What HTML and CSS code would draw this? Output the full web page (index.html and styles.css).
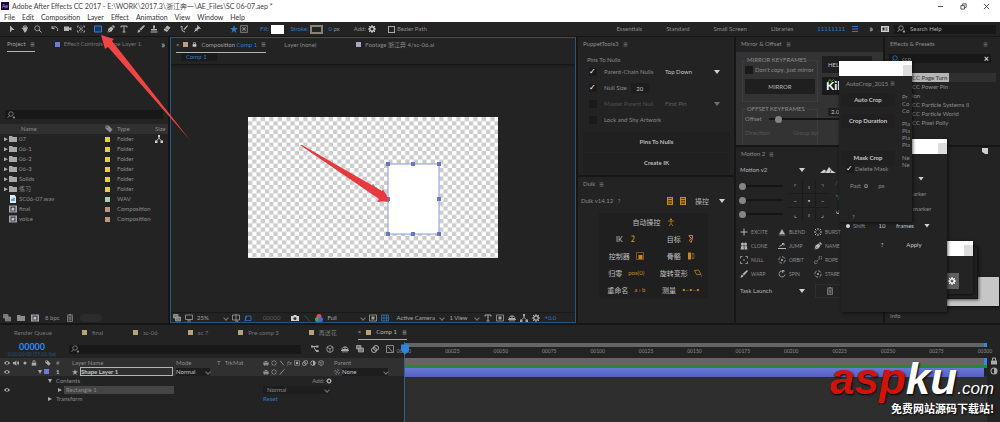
FILE: index.html
```
<!DOCTYPE html>
<html lang="en">
<head>
    <meta charset="UTF-8">
    <meta name="viewport" content="width=device-width, initial-scale=1.0">
    <title>Adobe After Effects CC 2017</title>
    <link rel="stylesheet" href="styles.css">
</head>
<body>
    <svg class="sprite" aria-hidden="true">
        <symbol id="i-menu" viewBox="0 0 16 16"><path d="M2 3h12M2 8h12M2 13h12" stroke="currentColor" stroke-width="2"/></symbol>
        <symbol id="i-arrow" viewBox="0 0 16 16"><path d="M4 1l9 9H8l-4 5z" fill="currentColor"/></symbol>
        <symbol id="i-hand" viewBox="0 0 16 16"><path d="M4 9L1 6l1-1 3 2-1-5 1-1 2 5V0h2v6l2-5 1 1-1 5 2-3 1 1-3 7-2 3H7z" fill="currentColor"/></symbol>
        <symbol id="i-zoom" viewBox="0 0 16 16"><circle cx="6.500" cy="6.500" r="5" fill="none" stroke="currentColor" stroke-width="1.500"/><path d="M10 10l5 5" stroke="currentColor" stroke-width="2"/></symbol>
        <symbol id="i-rotate" viewBox="0 0 16 16"><path d="M3 6c4-5 12-2 10 6M2 2v5h5" fill="none" stroke="currentColor" stroke-width="2"/></symbol>
        <symbol id="i-cam" viewBox="0 0 16 16"><path d="M0 3h10v3l5-2v7l-5-2v3H0z" fill="currentColor"/></symbol>
        <symbol id="i-anchor" viewBox="0 0 16 16"><path d="M1 5V2h3M12 2h3v3M15 11v3h-3M4 14H1v-3M7 2h2M7 14h2M8 5v6M5 8h6M4 4l2 2M12 4l-2 2M4 12l2-2M12 12l-2-2" fill="none" stroke="currentColor" stroke-width="1.500"/></symbol>
        <symbol id="i-rect" viewBox="0 0 16 16"><path d="M1 2h14v12H1z" fill="#123a66" stroke="#2f7fd0" stroke-width="2"/></symbol>
        <symbol id="i-pen" viewBox="0 0 16 16"><path d="M1 15l2-8 6-4 4 4-4 6zM10 2l2-2 4 4-2 2z" fill="currentColor"/><path d="M1 15l5-5" stroke="#222"/></symbol>
        <symbol id="i-type" viewBox="0 0 16 16"><path d="M2 5V2h12v3M8 2v12M5 14h6" fill="none" stroke="currentColor" stroke-width="2"/></symbol>
        <symbol id="i-brush" viewBox="0 0 16 16"><path d="M14 0l2 2-8 9-3-3zM4 9l3 3c-1 3-4 3-7 3 2-1 2-5 4-6z" fill="currentColor"/></symbol>
        <symbol id="i-stamp" viewBox="0 0 16 16"><path d="M6 1h4v3L9 8h5v3H2V8h5L6 4zM1 13h14v2H1z" fill="currentColor"/></symbol>
        <symbol id="i-eraser" viewBox="0 0 16 16"><path d="M8 1l7 4-7 9-7-4z" fill="currentColor"/><path d="M4 6l7 4" stroke="#222"/></symbol>
        <symbol id="i-roto" viewBox="0 0 16 16"><path d="M15 0l1 2-7 8-2-2z" fill="currentColor"/><path d="M1 4l3-2v9l6 3" fill="none" stroke="currentColor" stroke-width="2"/></symbol>
        <symbol id="i-pin" viewBox="0 0 16 16"><path d="M9 0l7 7-2 1-2-1-3 3v3L3 7h3l3-3-1-2zM5 9l2 2-6 4z" fill="currentColor"/></symbol>
        <symbol id="i-star" viewBox="0 0 16 16"><path d="M8 0l2 6h6l-5 4 2 6-5-4-5 4 2-6-5-4h6z" fill="currentColor"/></symbol>
        <symbol id="i-mesh" viewBox="0 0 16 16"><path d="M1 1h14v14H1zM3 3l10 10M13 3L3 13M8 3v10M3 8h10" fill="none" stroke="currentColor" stroke-width="1.500"/></symbol>
        <symbol id="i-gear" viewBox="0 0 16 16"><circle cx="8" cy="8" r="4.500" fill="none" stroke="currentColor" stroke-width="3"/><path d="M8 0v3M8 13v3M0 8h3M13 8h3M2 2l3 3M11 11l3 3M14 2l-3 3M5 11l-3 3" stroke="currentColor" stroke-width="2"/></symbol>
        <symbol id="i-search" viewBox="0 0 16 16"><circle cx="8" cy="6" r="4.500" fill="none" stroke="currentColor" stroke-width="1.500"/><path d="M5 9l-4 5M12 12h4l-2 3z" fill="currentColor" stroke="currentColor" stroke-width="1.500"/></symbol>
        <symbol id="i-folder" viewBox="0 0 16 16"><path d="M0 2h6l2 2h8v10H0z" fill="currentColor"/></symbol>
        <symbol id="i-comp" viewBox="0 0 16 16"><path d="M0 1h16v14H0z" fill="#a7a6ad"/><path d="M3 3h10v10H3z" fill="#4a4a50"/><path d="M5 7l3-2 3 2-1 4H5z" fill="#c5c4cc"/></symbol>
        <symbol id="i-wav" viewBox="0 0 16 16"><path d="M2 0h9l3 3v13H2z" fill="#dcebf4"/><path d="M5 12V8h2v4M9 12V6h2v6" fill="none" stroke="#3f8fc4" stroke-width="1.500"/></symbol>
        <symbol id="i-tag" viewBox="0 0 16 16"><path d="M1 1h6l8 8-5 6-9-8z" fill="currentColor"/><circle cx="4" cy="4" r="1.500" fill="#333"/></symbol>
        <symbol id="i-tree" viewBox="0 0 16 16"><path d="M6 0h4v5H6zM0 11h5v5H0zM11 11h5v5h-5z" fill="currentColor"/><path d="M8 5v3M3 11l5-4 5 4" fill="none" stroke="currentColor" stroke-width="1.500"/></symbol>
        <symbol id="i-trash" viewBox="0 0 16 16"><path d="M3 4h10v11H3zM2 2h12M6 1h4M6 6v7M8 6v7M10 6v7" fill="none" stroke="currentColor" stroke-width="1.500"/></symbol>
        <symbol id="i-stack" viewBox="0 0 16 16"><path d="M1 1h9v7H1zM5 6h10v8H5z" fill="#777" stroke="currentColor" stroke-width="1.500"/></symbol>
        <symbol id="i-monitor" viewBox="0 0 16 16"><path d="M1 2h14v9H1zM8 11v3M4 14h8" fill="none" stroke="currentColor" stroke-width="1.500"/></symbol>
        <symbol id="i-grid" viewBox="0 0 16 16"><path d="M1 2h14v10H1zM8 0v16M9 12l3 4" fill="none" stroke="currentColor" stroke-width="1.500"/></symbol>
        <symbol id="i-mask" viewBox="0 0 16 16"><path d="M3 4h11v9H3zM1 15L6 4" fill="none" stroke="currentColor" stroke-width="1.500"/></symbol>
        <symbol id="i-photo" viewBox="0 0 16 16"><path d="M0 4h4l2-2h4l2 2h4v10H0z" fill="currentColor"/><circle cx="8" cy="9" r="3" fill="#333"/></symbol>
        <symbol id="i-rgb" viewBox="0 0 16 16"><circle cx="8" cy="5" r="5" fill="#e34b4b"/><circle cx="5" cy="11" r="5" fill="#3fae57"/><circle cx="11" cy="11" r="5" fill="#4c67dd"/></symbol>
        <symbol id="i-box" viewBox="0 0 16 16"><path d="M1 2h14v12H1z" fill="none" stroke="currentColor" stroke-width="1.500"/><path d="M5 5h6v6H5z" fill="currentColor"/></symbol>
        <symbol id="i-check" viewBox="0 0 16 16"><path d="M1 2h14v12H1zM1 8h14M6 2v12M11 2v12" fill="none" stroke="currentColor" stroke-width="1.500"/></symbol>
        <symbol id="i-switch" viewBox="0 0 16 16"><path d="M0 2h16v12H0z" fill="currentColor"/><path d="M3 5h4v6H3zM9 5h4v2H9zM9 9h4v2H9z" fill="#222"/></symbol>
        <symbol id="i-calc" viewBox="0 0 16 16"><path d="M2 0h12v16H2z" fill="currentColor"/><path d="M4 3h8M4 7h8M4 10h8M4 13h8" stroke="#3a2a0c" stroke-width="1.500"/></symbol>
        <symbol id="i-eye" viewBox="0 0 16 16"><path d="M0 8c4-6 12-6 16 0-4 6-12 6-16 0z" fill="currentColor"/><circle cx="8" cy="8" r="3" fill="#222"/></symbol>
        <symbol id="i-speaker" viewBox="0 0 16 16"><path d="M0 5h4l5-4v14l-5-4H0zM11 4c3 2 3 6 0 8M13 1c4 4 4 10 0 14" fill="currentColor"/></symbol>
        <symbol id="i-dot" viewBox="0 0 16 16"><circle cx="8" cy="8" r="4" fill="currentColor"/></symbol>
        <symbol id="i-lock" viewBox="0 0 16 16"><path d="M2 7h12v8H2z" fill="currentColor"/><path d="M5 7V2h6v5" fill="none" stroke="currentColor" stroke-width="2"/></symbol>
        <symbol id="i-slash" viewBox="0 0 16 16"><path d="M3 2l10 12" stroke="currentColor" stroke-width="2"/></symbol>
        <symbol id="i-quality" viewBox="0 0 16 16"><path d="M2 15L14 1" stroke="currentColor" stroke-width="2"/></symbol>
        <symbol id="i-blur" viewBox="0 0 16 16"><circle cx="10" cy="6" r="5" fill="none" stroke="currentColor" stroke-width="2"/><circle cx="6" cy="10" r="5" fill="none" stroke="currentColor" stroke-width="2"/></symbol>
        <symbol id="i-half" viewBox="0 0 16 16"><circle cx="8" cy="8" r="7" fill="currentColor"/><path d="M8 3a5 5 0 0 0 0 10z" fill="#222"/></symbol>
        <symbol id="i-cube" viewBox="0 0 16 16"><path d="M8 1l6 3v8l-6 3-6-3V4zM2 4l6 4 6-4M8 8v7" fill="none" stroke="currentColor" stroke-width="1.500"/></symbol>
        <symbol id="i-shy" viewBox="0 0 16 16"><path d="M2 9c0-7 12-7 12 0H2zM0 11h16M4 11v4M12 11v4M8 4v11" fill="none" stroke="currentColor" stroke-width="2"/></symbol>
        <symbol id="i-flow" viewBox="0 0 16 16"><path d="M0 3h14M5 3l5 9h5" fill="none" stroke="currentColor" stroke-width="2"/><path d="M10 1h5v4h-5zM10 10h5v4h-5zM0 1h4v4H0z" fill="currentColor"/></symbol>
        <symbol id="i-graph" viewBox="0 0 16 16"><path d="M1 1h14v14H1zM3 4c6 0 4 8 10 9" fill="none" stroke="currentColor" stroke-width="1.500"/></symbol>
        <symbol id="i-burst" viewBox="0 0 16 16"><path d="M8 0v4M8 12v4M0 8h4M12 8h4M2 2l3 3M11 11l3 3M14 2l-3 3M5 11l-3 3" stroke="currentColor" stroke-width="2"/></symbol>
        <symbol id="i-plus" viewBox="0 0 16 16"><path d="M8 1v14M1 8h14" stroke="currentColor" stroke-width="2"/></symbol>
        <symbol id="i-blend" viewBox="0 0 16 16"><path d="M1 14h14M3 12L8 3l5 9z" fill="currentColor" stroke="currentColor"/></symbol>
        <symbol id="i-people" viewBox="0 0 16 16"><circle cx="5" cy="4" r="3" fill="currentColor"/><circle cx="11" cy="4" r="3" fill="currentColor"/><path d="M1 15l2-8h4l1 8zM9 15V7h4l2 8z" fill="currentColor"/></symbol>
        <symbol id="i-jump" viewBox="0 0 16 16"><path d="M0 13h16M3 9l8-5M8 3h4v4" fill="none" stroke="currentColor" stroke-width="2"/></symbol>
        <symbol id="i-null" viewBox="0 0 16 16"><path d="M1 5V1h4M11 1h4v4M15 11v4h-4M5 15H1v-4" fill="none" stroke="currentColor" stroke-width="1.500"/><circle cx="8" cy="8" r="1.500" fill="currentColor"/></symbol>
        <symbol id="i-orbit" viewBox="0 0 16 16"><circle cx="8" cy="8" r="6.500" fill="none" stroke="currentColor" stroke-width="1.500" stroke-dasharray="7 3"/><circle cx="8" cy="8" r="2" fill="currentColor"/></symbol>
        <symbol id="i-spin" viewBox="0 0 16 16"><path d="M9 2a6 6 0 1 0 5 7M9 0v5l4-3z" fill="none" stroke="currentColor" stroke-width="1.500"/></symbol>
        <symbol id="i-rope" viewBox="0 0 16 16"><path d="M1 10h5v5H1zM10 1h5v5h-5zM6 10l4-4" fill="none" stroke="currentColor" stroke-dasharray="3 1"/></symbol>
        <symbol id="i-mount" viewBox="0 0 32 16"><path d="M0 14l8-7 5 3 5-8 6 7 8 5z" fill="currentColor"/><path d="M9 14l5-5M20 14l2-6" stroke="#232323"/></symbol>
        <symbol id="i-corner" viewBox="0 0 16 16"><path d="M0 0h16v16H8l-8-6z" fill="currentColor"/></symbol>
    </svg>

    <header class="titlebar">
        <span class="logo">Ae</span>
        <h1>Adobe After Effects CC 2017 - E:\WORK\2017.3\浙江奔一\AE_Files\SC 06-07.aep *</h1>
        <div class="win-buttons">
            <button aria-label="Minimize"><svg viewBox="0 0 8 8"><path d="M1 4h6" stroke="#444"/></svg></button>
            <button aria-label="Restore"><svg viewBox="0 0 8 8"><path d="M1 3h4v4H1zM3 3V1h4v4H5" fill="none" stroke="#444"/></svg></button>
            <button aria-label="Close"><svg viewBox="0 0 8 8"><path d="M1 1l6 6M7 1L1 7" stroke="#444"/></svg></button>
        </div>
    </header>
    <nav class="menubar">
        <a href="#">File</a><a href="#">Edit</a><a href="#">Composition</a><a href="#">Layer</a><a href="#">Effect</a><a href="#">Animation</a><a href="#">View</a><a href="#">Window</a><a href="#">Help</a>
    </nav>

    <div class="toolbar">
        <div class="tools">
            <button aria-label="Selection"><svg><use href="#i-arrow"/></svg></button>
            <button aria-label="Hand"><svg><use href="#i-hand"/></svg></button>
            <button aria-label="Zoom"><svg><use href="#i-zoom"/></svg></button>
        </div>
        <div class="tools">
            <button aria-label="Rotation"><svg><use href="#i-rotate"/></svg></button>
            <button aria-label="Camera"><svg><use href="#i-cam"/></svg></button>
            <button aria-label="Anchor point"><svg><use href="#i-anchor"/></svg></button>
        </div>
        <div class="tools">
            <button aria-label="Rectangle"><svg><use href="#i-rect"/></svg></button>
            <button aria-label="Pen"><svg><use href="#i-pen"/></svg></button>
            <button aria-label="Type"><svg><use href="#i-type"/></svg></button>
        </div>
        <div class="tools">
            <button aria-label="Brush"><svg><use href="#i-brush"/></svg></button>
            <button aria-label="Clone stamp"><svg><use href="#i-stamp"/></svg></button>
            <button aria-label="Eraser"><svg><use href="#i-eraser"/></svg></button>
        </div>
        <div class="tools">
            <button aria-label="Roto brush"><svg><use href="#i-roto"/></svg></button>
            <button aria-label="Puppet pin"><svg><use href="#i-pin"/></svg></button>
        </div>
        <div class="shape-options">
            <svg class="blue"><use href="#i-star"/></svg>
            <svg><use href="#i-mesh"/></svg>
            <span class="blue option">Fill:</span><button class="fill-swatch" aria-label="Fill color"></button>
            <span class="blue">Stroke:</span><button class="stroke-swatch" aria-label="Stroke color"></button>
            <span class="px"><b class="blue">0</b> px</span>
            <span>Add:</span><svg class="light"><use href="#i-gear"/></svg>
            <label class="bezier"><input type="checkbox"> Bezier Path</label>
        </div>
        <div class="workspaces">
            <a href="#">Essentials</a><a href="#">Standard</a><a href="#">Small Screen</a><a href="#">Libraries</a>
            <a href="#" class="blue current">11111111</a><svg class="blue"><use href="#i-menu"/></svg>
            <span class="light more">»</span>
            <svg class="light"><use href="#i-switch"/></svg>
            <label class="help-search"><svg><use href="#i-search"/></svg><input type="text" value="Search Help" aria-label="Search Help"></label>
        </div>
    </div>

    <main class="workspace">
        <section class="panel project">
            <div class="tabs">
                <span class="tab active">Project <svg><use href="#i-menu"/></svg></span>
                <span class="tab second"><i class="swatch violet"></i>Effect Controls Shape Layer 1</span>
                <span class="light more">»</span>
            </div>
            <div class="preview"></div>
            <label class="search"><svg><use href="#i-search"/></svg><input type="text" aria-label="Search project"></label>
            <table class="files">
                <colgroup><col class="c-name"><col class="c-tag"><col class="c-type"><col></colgroup>
                <thead>
                    <tr><th class="first">Name</th><th><svg><use href="#i-tag"/></svg></th><th>Type</th><th>Size</th></tr>
                </thead>
                <tbody>
                    <tr><td><i class="tri"></i><svg><use href="#i-folder"/></svg>07</td><td><i class="swatch yellow"></i></td><td>Folder</td><td><svg class="light"><use href="#i-tree"/></svg></td></tr>
                    <tr><td><i class="tri"></i><svg><use href="#i-folder"/></svg>06-1</td><td><i class="swatch yellow"></i></td><td>Folder</td><td></td></tr>
                    <tr><td><i class="tri"></i><svg><use href="#i-folder"/></svg>06-2</td><td><i class="swatch yellow"></i></td><td>Folder</td><td></td></tr>
                    <tr><td><i class="tri"></i><svg><use href="#i-folder"/></svg>06-3</td><td><i class="swatch yellow"></i></td><td>Folder</td><td></td></tr>
                    <tr><td><i class="tri"></i><svg><use href="#i-folder"/></svg>Solids</td><td><i class="swatch yellow"></i></td><td>Folder</td><td></td></tr>
                    <tr><td><i class="tri"></i><svg><use href="#i-folder"/></svg>练习</td><td><i class="swatch yellow"></i></td><td>Folder</td><td></td></tr>
                    <tr><td><i class="tri none"></i><svg><use href="#i-wav"/></svg>SC06-07.wav</td><td><i class="swatch mint"></i></td><td>WAV</td><td></td></tr>
                    <tr><td><i class="tri none"></i><svg><use href="#i-comp"/></svg>final</td><td><i class="swatch tan"></i></td><td>Composition</td><td></td></tr>
                    <tr><td><i class="tri none"></i><svg><use href="#i-comp"/></svg>voice</td><td><i class="swatch tan"></i></td><td>Composition</td><td></td></tr>
                </tbody>
            </table>
            <div class="project-foot">
                <svg><use href="#i-stack"/></svg><svg><use href="#i-folder"/></svg><svg><use href="#i-comp"/></svg>
                <span>8 bpc</span><svg><use href="#i-trash"/></svg><i class="pill"></i>
            </div>
        </section>

        <section class="panel composition">
            <div class="tabs">
                <span class="tab active">× <i class="swatch sand"></i><svg class="light"><use href="#i-lock"/></svg> <span>Composition <b class="blue">Comp 1</b></span> <svg><use href="#i-menu"/></svg></span>
                <span class="tab">Layer (none)</span>
                <span class="tab footage"><i class="swatch lilac"></i>Footage 浙江奔 4/sc-06.ai</span>
            </div>
            <div class="crumbs"><a href="#" class="blue">Comp 1</a></div>
            <div class="viewer">
                <svg class="stage" viewBox="0 0 250 141">
                    <defs>
                        <pattern id="checks" width="8.500" height="8.500" patternUnits="userSpaceOnUse">
                            <path d="M0 0h8.500v8.500H0z" fill="#fff"/>
                            <path d="M4.250 0H8.500v4.250H4.250zM0 4.250h4.250V8.500H0z" fill="#ccc"/>
                        </pattern>
                    </defs>
                    <path d="M0 0h250v141H0z" fill="url(#checks)"/>
                    <path d="M140 47h51v70h-51z" fill="#fff" stroke="#8a9ae0"/>
                    <g fill="none" stroke="#5b86c9"><circle cx="125" cy="71" r="2"/><path d="M121 71h8M125 67v8"/></g>
                    <path d="M53 28.500L133 80l-2 3 10 2-3-9-2 2z" fill="#e8383d"/>
                    <g fill="#6a76bd"><path d="M138 45h4v4h-4zM163 45h4v4h-4zM189 45h4v4h-4zM138 80h4v4h-4zM189 80h4v4h-4zM138 115h4v4h-4zM163 115h4v4h-4zM189 115h4v4h-4z"/></g>
                    <path d="M52 28l2 0 80 46 1-2 6 12-12 1 2-3z" fill="#e8383d"/>
                </svg>
            </div>
            <div class="view-foot">
                <svg><use href="#i-stack"/></svg><svg><use href="#i-monitor"/></svg>
                <span class="drop w-zoom"><select aria-label="Magnification"><option>25%</option></select></span>
                <svg><use href="#i-grid"/></svg><svg class="blue"><use href="#i-mask"/></svg>
                <span class="dim frame">00000</span>
                <svg class="light"><use href="#i-photo"/></svg><svg class="dark"><use href="#i-slash"/></svg><svg><use href="#i-rgb"/></svg>
                <span class="drop w-res"><select aria-label="Resolution"><option>Full</option></select></span>
                <svg><use href="#i-box"/></svg><svg class="blue"><use href="#i-check"/></svg>
                <span class="drop w-camera"><select aria-label="3D view"><option>Active Camera</option></select></span>
                <span class="drop w-view"><select aria-label="View layout"><option>1 View</option></select></span>
                <svg><use href="#i-type"/></svg><svg><use href="#i-box"/></svg><svg><use href="#i-shy"/></svg><svg><use href="#i-tree"/></svg><svg><use href="#i-gear"/></svg>
                <span class="blue">+0.0</span>
            </div>
        </section>

        <div class="column">
            <section class="panel puppet">
                <div class="tabs"><span class="tab">PuppetTools3 <svg><use href="#i-menu"/></svg></span></div>
                <form class="puppet-form">
                    <h2>Pins To Nulls</h2>
                    <div class="line"><label><input type="checkbox" checked>Parent-Chain Nulls</label><span class="drop solid w-pin"><select aria-label="Chain order"><option>Top Down</option></select></span></div>
                    <div class="line"><label><input type="checkbox" checked>Null Size</label><input class="num" type="text" value="20" aria-label="Null size"></div>
                    <div class="line off"><label><input type="checkbox">Master Parent Null</label><span class="drop solid w-pin"><select aria-label="Master pin"><option>First Pin</option></select></span></div>
                    <div class="line"><label><input type="checkbox">Lock and Shy Artwork</label></div>
                    <div class="puppet-buttons">
                        <button type="button">Pins To Nulls</button>
                        <button type="button">Create IK</button>
                    </div>
                </form>
            </section>
            <section class="panel duik">
                <div class="tabs"><span class="tab">Duik <svg><use href="#i-menu"/></svg></span></div>
                <div class="duik-head">
                    <span>Duik v14.12 &nbsp; ?</span>
                    <svg class="orange"><use href="#i-calc"/></svg><svg class="orange"><use href="#i-calc"/></svg>
                    <span class="drop solid w-duik"><select aria-label="Duik panel"><option>操控</option></select></span>
                </div>
                <div class="duik-grid">
                    <button class="full">自动操控 <svg viewBox="0 0 16 16"><circle cx="8" cy="3" r="2" fill="currentColor"/><path d="M2 6h12M8 6v5l-4 5M8 11l4 5" fill="none" stroke="currentColor" stroke-width="1.500"/></svg></button>
                    <button>IK <svg viewBox="0 0 16 16"><path d="M5 2h5v5l-5 6h6" fill="none" stroke="currentColor" stroke-width="2"/></svg></button>
                    <button>目标 <svg viewBox="0 0 16 16"><path d="M4 1h7v6l-3 8-3-4 4-5-4-2z" fill="none" stroke="currentColor" stroke-width="2"/></svg></button>
                    <button>控制器 <svg viewBox="0 0 16 16"><path d="M1 1h14v14H1z" fill="none" stroke="currentColor"/><path d="M5 6h8v8H5z" fill="currentColor"/></svg></button>
                    <button>骨骼 <svg viewBox="0 0 16 16"><path d="M2 1h6v14H2z" fill="currentColor"/><path d="M10 3h4v10h-4z" fill="none" stroke="currentColor"/></svg></button>
                    <button>归零 <em>pos(0)</em></button>
                    <button>旋转变形 <svg viewBox="0 0 16 16"><path d="M1 3l8-1 5 9H5zM14 14h2" fill="none" stroke="currentColor" stroke-width="1.500"/></svg></button>
                    <button>重命名 <em>a › b</em></button>
                    <button>测量 <em>•–•–•</em></button>
                </div>
            </section>
        </div>

        <div class="column">
            <section class="panel mirror">
                <div class="tabs"><span class="tab">Mirror &amp; Offset <svg><use href="#i-menu"/></svg></span></div>
                <div class="mirror-body">
                    <div class="mirror-main">
                        <fieldset>
                            <legend>MIRROR KEYFRAMES</legend>
                            <label><input type="checkbox">Don't copy, just mirror</label>
                            <button>MIRROR</button>
                        </fieldset>
                        <fieldset>
                            <legend>OFFSET KEYFRAMES</legend>
                            <label class="slide">Offset <input type="range" min="0" max="20" value="2"></label>
                            <div class="faint"><span>Direction:</span><span>Group by:</span></div>
                        </fieldset>
                    </div>
                    <div class="mirror-side">
                        <button>HELP</button>
                        <div class="kiki"><svg viewBox="0 0 16 8"><path d="M1 7l5-6 3 4 4-4 2 2" fill="none" stroke="#59a832" stroke-width="2"/></svg>Kiki</div>
                        <input type="text" value="2.0" aria-label="Offset value">
                    </div>
                </div>
            </section>
            <section class="panel motion">
                <div class="tabs"><span class="tab">Motion 2 <svg><use href="#i-menu"/></svg></span></div>
                <div class="motion-head">
                    <span class="drop solid w-motion"><select aria-label="Motion version"><option>Motion v2</option></select></span>
                    <svg class="mount light"><use href="#i-mount"/></svg>
                </div>
                <div class="motion-ease">
                    <div class="sliders">
                        <input type="range" value="0" aria-label="Ease in"><input type="range" value="0" aria-label="Ease both"><input type="range" value="0" aria-label="Ease out">
                    </div>
                    <div class="nine"><span>⌜</span><span>ı</span><span>⌝</span><span>–</span><span>▪</span><span>–</span><span>⌞</span><span>ı</span><span>⌟</span></div>
                    <div class="marks"><i class="plum">/</i><i class="teal">⤡</i><i>⚓</i></div>
                </div>
                <div class="motion-grid">
                    <button><svg><use href="#i-plus"/></svg>EXCITE</button><button><svg><use href="#i-blend"/></svg>BLEND</button><button><svg><use href="#i-burst"/></svg>BURST</button>
                    <button><svg><use href="#i-people"/></svg>CLONE</button><button><svg><use href="#i-jump"/></svg>JUMP</button><button><svg><use href="#i-pen"/></svg>NAME</button>
                    <button><svg><use href="#i-null"/></svg>NULL</button><button><svg><use href="#i-orbit"/></svg>ORBIT</button><button><svg><use href="#i-rope"/></svg>ROPE</button>
                    <button><svg><use href="#i-brush"/></svg>WARP</button><button><svg><use href="#i-spin"/></svg>SPIN</button><button><svg><use href="#i-orbit"/></svg>STARE</button>
                </div>
                <div class="motion-foot">
                    <span class="drop solid w-motion"><select aria-label="Task"><option>Task Launch</option></select></span>
                    <button aria-label="Delete"><svg><use href="#i-trash"/></svg></button>
                </div>
            </section>
        </div>

        <div class="column">
            <section class="panel effects">
                <div class="tabs spread"><span class="tab">Effects &amp; Presets</span><svg><use href="#i-menu"/></svg></div>
                <label class="search"><svg class="blue"><use href="#i-search"/></svg><input type="text" value="ccp" aria-label="Search effects"><b>×</b></label>
                <ul>
                    <li class="picked"><span>CC Page Turn</span></li>
                    <li>CC Power Pin</li>
                    <li>ion</li>
                    <li>CC Particle Systems II</li>
                    <li>CC Particle World</li>
                    <li>CC Pixel Polly</li>
                </ul>
            </section>
            <section class="panel info">
                <svg class="light"><use href="#i-corner"/></svg>
                <span>Info</span>
            </section>
        </div>
    </main>

    <!-- floating script palettes -->
    <div class="float plate"></div>
    <div class="float gear-back"></div>
    <div class="float gear-win">
        <div class="cap"><i></i></div>
        <button aria-label="Settings"><svg><use href="#i-gear"/></svg></button>
    </div>
    <div class="float marker-win">
        <div class="cap"><i></i></div>
        <div class="marker-body">
            <i class="down"></i>
            <span>arker</span>
            <span>marker</span>
        </div>
        <form class="shift-form">
            <label><input type="radio" checked>Shift</label>
            <input class="num" type="text" value="10" aria-label="Shift amount">
            <span class="drop solid w-frames"><select aria-label="Shift unit"><option>frames</option></select></span>
            <button type="button" class="ask">?</button>
            <button type="button" class="apply">Apply</button>
        </form>
    </div>
    <div class="float crop-win">
        <div class="cap"><i></i></div>
        <div class="crop-body">
            <div class="crop-main">
                <span class="crop-title">AutoCrop_2015 <svg><use href="#i-menu"/></svg></span>
                <button>Auto Crop</button>
                <button>Crop Duration</button>
                <button class="apart">Mask Crop</button>
                <label><input type="checkbox" checked>Delete Mask</label>
                <label class="pad">Pad: <input class="num" type="text" value="0"> <span>px</span></label>
                <span class="q">?</span>
            </div>
            <div class="crop-side"><span>Pr</span><span>Co</span><span>Co</span><span class="gap">Pla</span><span>Pla</span><span>Pla</span><span>Pla</span><span class="gap">Ne</span><span>Ne</span></div>
        </div>
    </div>

    <section class="timeline">
        <div class="comp-tabs">
            <span class="queue">Render Queue</span>
            <span><i class="swatch sand"></i>final</span>
            <span><i class="swatch sand"></i>sc-06</span>
            <span><i class="swatch sand"></i>sc 7</span>
            <span><i class="swatch sand"></i>Pre-comp 3</span>
            <span><i class="swatch sand"></i>再送花</span>
            <span class="active">× <i class="swatch sand"></i>Comp 1 <svg><use href="#i-menu"/></svg></span>
        </div>
        <div class="time-body">
            <div class="layers">
                <div class="layer-bar">
                    <div class="timecode"><b>00000</b><small>0:00:00:00 (25.00 fps)</small></div>
                    <label class="search"><svg><use href="#i-search"/></svg><input type="text" aria-label="Search layers"></label>
                    <div class="layer-icons">
                        <svg><use href="#i-flow"/></svg><svg><use href="#i-cube"/></svg><svg><use href="#i-shy"/></svg><svg><use href="#i-stack"/></svg><svg><use href="#i-blur"/></svg><svg><use href="#i-graph"/></svg>
                    </div>
                </div>
                <table class="layer-table">
                    <colgroup><col class="l-av"><col class="l-tag"><col class="l-num"><col class="l-name"><col class="l-mode"><col class="l-mat"><col class="l-sw"><col></colgroup>
                    <thead>
                        <tr>
                            <th class="icons"><svg><use href="#i-eye"/></svg><svg><use href="#i-speaker"/></svg><svg><use href="#i-dot"/></svg><svg><use href="#i-lock"/></svg></th>
                            <th class="mid"><svg><use href="#i-tag"/></svg></th><th>#</th><th>Layer Name</th><th>Mode</th><th>T &nbsp; TrkMat</th>
                            <th class="icons"><svg><use href="#i-shy"/></svg><svg><use href="#i-burst"/></svg><svg><use href="#i-slash"/></svg><i>fx</i><svg><use href="#i-box"/></svg><svg><use href="#i-blur"/></svg><svg><use href="#i-half"/></svg><svg><use href="#i-cube"/></svg></th>
                            <th>Parent</th>
                        </tr>
                    </thead>
                    <tbody>
                        <tr class="selected">
                            <td class="icons"><svg><use href="#i-eye"/></svg></td>
                            <td><i class="tri open"></i><i class="swatch violet"></i></td><td><b>1</b></td>
                            <td class="name"><svg><use href="#i-star"/></svg><b>Shape Layer 1</b></td>
                            <td><span class="drop"><select aria-label="Blend mode"><option>Normal</option></select></span></td><td></td>
                            <td class="icons"><svg><use href="#i-shy"/></svg><svg><use href="#i-burst"/></svg><svg><use href="#i-quality"/></svg></td>
                            <td><svg><use href="#i-orbit"/></svg><span class="drop w-parent"><select aria-label="Parent"><option>None</option></select></span></td>
                        </tr>
                        <tr><td></td><td colspan="5" class="indent"><i class="tri open"></i>Contents</td><td class="add">Add: <svg class="light"><use href="#i-gear"/></svg></td><td></td></tr>
                        <tr><td class="icons"><svg><use href="#i-eye"/></svg></td><td></td><td colspan="2" class="shape"><i class="tri"></i><span>Rectangle 1</span></td><td></td><td></td><td><span class="drop w-group"><select aria-label="Group mode"><option>Normal</option></select></span></td><td></td></tr>
                        <tr><td></td><td colspan="5" class="indent"><i class="tri"></i>Transform</td><td><a href="#" class="blue">Reset</a></td><td></td></tr>
                    </tbody>
                </table>
            </div>
            <div class="lanes">
                <div class="navigator"></div>
                <div class="ruler"><span>00000</span><span>00025</span><span>00050</span><span>00075</span><span>00100</span><span>00125</span><span>00150</span><span>00175</span><span>00200</span><span>00225</span><span>00250</span><span>00275</span><span>00300</span></div>
                <div class="work-area"></div>
                <div class="cache"></div>
                <div class="clip"></div>
                <div class="playhead"><svg viewBox="0 0 8 12"><path d="M0 2h8v6l-4 4-4-4z" fill="#2f86d8"/></svg></div>
            </div>
            <div class="lane-end"><svg><use href="#i-lock"/></svg><svg><use href="#i-half"/></svg></div>
        </div>
    </section>

    <svg class="pointer" viewBox="0 0 90 106"><path d="M0 0l13 4-2 2 78 99L7 12l-3 2z" fill="#f04545"/></svg>

    <div class="watermark">
        <div class="site"><span>asp</span>ku<small>.com</small></div>
        <div class="slogan">免费网站源码下载站!</div>
    </div>
</body>
</html>
```
FILE: styles.css
```
* {
    box-sizing: border-box;
}
body {
    margin: 0;
    min-height: 100vh;
    position: relative;
    display: flex;
    flex-direction: column;
    overflow: hidden;
    background: #161616;
    color: #8c8c8c;
    font-family: Lato, "Open Sans", "Noto Sans CJK SC", sans-serif;
    font-size: 6px;
    line-height: 8px;
}
button, input, select {
    font: inherit;
    color: inherit;
    background: none;
    border: 0;
    padding: 0;
    margin: 0;
    min-width: 0;
}
button {
    cursor: pointer;
}
a {
    color: inherit;
    text-decoration: none;
}
h1, h2 {
    margin: 0;
    font-size: inherit;
    font-weight: normal;
}
svg {
    width: 8px;
    height: 8px;
    flex: none;
}
.sprite {
    position: absolute;
    width: 0;
    height: 0;
}
b.blue {
    font-weight: normal;
}
.blue {
    color: #2d7cc4;
}
.light {
    color: #d0d0d0;
}
.dim {
    color: #5f5f5f;
}
.dark {
    color: #444;
}
.orange {
    color: #c98a1e;
}
.more {
    font-size: 9px;
}

/* window chrome */
.titlebar {
    height: 12px;
    display: flex;
    align-items: center;
    gap: 3px;
    padding: 0 10px 0 1px;
    background: #fff;
    color: #444;
    font-size: 7px;
}
.logo {
    width: 8px;
    height: 8px;
    background: #1d0442;
    color: #b9a2f5;
    font-size: 5px;
    text-align: center;
}
.win-buttons {
    margin-left: auto;
    display: flex;
    gap: 16px;
}
.win-buttons button {
    display: flex;
}
.win-buttons svg {
    width: 7px;
    height: 7px;
}
.menubar {
    height: 10px;
    display: flex;
    align-items: center;
    gap: 7px;
    padding-left: 4px;
    background: #fff;
    color: #333;
    font-size: 7px;
}
.toolbar {
    height: 15px;
    display: flex;
    align-items: center;
    padding: 0 4px 0 8px;
    background: #232323;
    border-bottom: 1px solid #161616;
}
.tools {
    display: flex;
    gap: 5px;
    margin-right: 9px;
    color: #b5b5b5;
}
.tools button {
    display: flex;
}
.shape-options {
    display: flex;
    align-items: center;
    gap: 2px;
    margin-left: 20px;
}
.option {
    margin-left: 10px;
}
.fill-swatch {
    width: 13px;
    height: 9px;
    margin-right: 4px;
    background: #fff;
}
.stroke-swatch {
    width: 13px;
    height: 9px;
    border: 2px solid #8a8078;
}
.px {
    margin: 0 12px 0 3px;
}
.bezier {
    display: flex;
    align-items: center;
    gap: 2px;
    margin-left: 10px;
}
.bezier input {
    appearance: none;
    width: 7px;
    height: 7px;
    border: 1px solid #aaa;
}
.workspaces {
    display: flex;
    align-items: center;
    margin-left: auto;
    gap: 24px;
}
.workspaces .current {
    margin-right: -18px;
}
.workspaces .more {
    margin: 0 -16px 0 -14px;
}
.workspaces > svg:last-of-type {
    margin-right: -19px;
}
.help-search {
    width: 102px;
    height: 9px;
    display: flex;
    align-items: center;
    gap: 5px;
    padding-left: 3px;
    background: #181818;
    color: #aaa;
}
.help-search input {
    flex: 1;
}

/* panels */
.workspace {
    height: 288px;
    display: grid;
    grid-template-columns: 168px 1fr 156px 147px 115px;
    column-gap: 2px;
    padding-bottom: 2px;
}
.column {
    display: flex;
    flex-direction: column;
    gap: 2px;
    min-width: 0;
}
.panel {
    min-width: 0;
    display: flex;
    flex-direction: column;
    background: #232323;
    overflow: hidden;
}
.tabs {
    height: 15px;
    flex: none;
    display: flex;
    align-items: center;
    padding: 0 5px;
    white-space: nowrap;
}
.tabs.spread {
    justify-content: space-between;
    padding-right: 12px;
}
.tab {
    display: flex;
    align-items: center;
    gap: 4px;
    height: 15px;
    border-bottom: 1px solid transparent;
}
.tab svg, .tabs.spread svg, .crop-title svg {
    width: 5px;
    height: 5px;
}
.tab.active {
    border-color: #b5b5b5;
    color: #a0a0a0;
}
.swatch {
    display: inline-block;
    width: 5px;
    height: 5px;
    flex: none;
}
.violet {
    background: #7078d8;
}
.yellow {
    background: #e2d04a;
}
.mint {
    background: #a9cdb9;
}
.tan {
    background: #b9967c;
}
.sand {
    background: #b8a27c;
}
.lilac {
    background: #a9a5c4;
}
.search {
    height: 9px;
    flex: none;
    display: flex;
    align-items: center;
    gap: 3px;
    padding: 0 2px;
    background: #181818;
}
.search input {
    flex: 1;
}
.project .tabs {
    gap: 20px;
    padding: 0 3px 0 7px;
}
.project .second {
    color: #777;
}
.project .tabs > .light {
    margin-left: auto;
}
.preview {
    height: 58px;
    flex: none;
}
.project .search {
    margin: 0 5px 5px;
}
.files {
    width: 100%;
    table-layout: fixed;
    border-collapse: collapse;
}
.c-name {
    width: 105px;
}
.c-tag {
    width: 12px;
}
.c-type {
    width: 38px;
}
.files tr {
    height: 10px;
}
.files th {
    padding: 0;
    background: #303030;
    font-weight: normal;
    text-align: left;
}
.files .first {
    padding-left: 21px;
}
.files td {
    padding: 0;
    white-space: nowrap;
}
.files svg, .files i {
    vertical-align: middle;
}
.files td:first-child {
    padding-left: 4px;
}
.files td:first-child svg {
    color: #aaa;
    margin: 0 2px 0 1px;
}
.tri {
    display: inline-block;
    width: 4px;
    height: 4px;
    background: #aaa;
    clip-path: polygon(0 0, 100% 50%, 0 100%);
}
.tri.open {
    clip-path: polygon(0 0, 100% 0, 50% 100%);
}
.tri.none {
    background: none;
}
.project-foot {
    height: 10px;
    margin-top: auto;
    display: flex;
    align-items: center;
    gap: 6px;
    padding: 0 3px;
}
.pill {
    width: 22px;
    height: 8px;
    border-radius: 4px;
    background: #2c2c2c;
}

.composition {
    border: 1px solid #24587f;
}
.composition .tabs {
    gap: 18px;
    height: 14px;
}
.composition .footage {
    margin-left: 22px;
}
.crumbs {
    height: 13px;
    flex: none;
    display: flex;
    padding: 1px 10px 3px;
    border-bottom: 1px solid #161616;
}
.crumbs a {
    width: 36px;
    padding-left: 5px;
    background: #1a1a1a;
}
.viewer {
    flex: 1;
    display: flex;
    justify-content: center;
    align-items: center;
    padding-bottom: 5px;
    border-top: 2px solid #1e1e1e;
}
.stage {
    width: 250px;
    height: 141px;
}
.view-foot {
    height: 10px;
    flex: none;
    display: flex;
    align-items: center;
    gap: 4px;
    padding: 0 2px;
    border-top: 1px solid #191919;
    white-space: nowrap;
    color: #a5a5a5;
}
.frame {
    margin: 0 7px;
}

/* drop-downs */
.drop {
    display: inline-flex;
    align-items: center;
}
.drop select {
    appearance: none;
    flex: 1;
    height: 8px;
    line-height: 8px;
}
.drop::after {
    content: "";
    width: 3px;
    height: 3px;
    border: solid #777;
    border-width: 0 1px 1px 0;
    transform: rotate(45deg);
}
.drop.solid::after {
    width: 6px;
    height: 4px;
    border: 0;
    background: #d0d0d0;
    clip-path: polygon(0 0, 100% 0, 50% 100%);
    transform: none;
}
.w-zoom {
    width: 31px;
}
.w-res {
    width: 38px;
}
.w-camera {
    width: 48px;
    margin-left: 3px;
}
.w-view {
    width: 30px;
    margin: 0 1px;
}
.w-pin {
    width: 55px;
    color: #c5c5c5;
}
.w-duik {
    width: 30px;
    margin-left: 3px;
    color: #b5b5b5;
    font-size: 7px;
}
.w-motion {
    width: 65px;
    color: #b5b5b5;
}
.w-frames {
    width: 34px;
}

/* puppet tools */
.puppet {
    height: 138px;
}
.puppet-form {
    padding: 4px 4px 0 5px;
    display: flex;
    flex-direction: column;
}
.puppet-form h2 {
    padding-left: 4px;
}
.line {
    height: 16px;
    display: flex;
    align-items: center;
    justify-content: space-between;
    padding: 0 10px 0 6px;
}
.line label {
    display: flex;
    align-items: center;
    gap: 7px;
}
.line .num {
    width: 18px;
    height: 10px;
    margin-right: auto;
    margin-left: 4px;
    text-align: center;
    background: #1d1d1d;
    color: #c5c5c5;
}
input[type="checkbox"] {
    cursor: pointer;
}
.line [type="checkbox"], .mirror [type="checkbox"], .crop-win [type="checkbox"] {
    appearance: none;
    width: 8px;
    height: 8px;
    background: #1a1a1a;
}
.line :checked::before, .crop-win :checked::before {
    content: "✓";
    display: block;
    color: #fff;
    font: bold 8px/8px "DejaVu Sans", sans-serif;
}
.line.off {
    color: #505050;
}
.line.off .drop {
    color: #606060;
}
.line.off .drop::after {
    background: #707070;
}
.puppet-buttons {
    display: grid;
    grid-auto-rows: 20px;
    gap: 1px;
    margin-top: 4px;
}
.puppet-buttons button {
    color: #bbb;
    background: #202020;
    font-weight: bold;
}

/* duik */
.duik {
    flex: 1;
}
.duik-head {
    height: 18px;
    display: flex;
    align-items: center;
    gap: 5px;
    padding: 0 9px 0 3px;
}
.duik-head span:first-child {
    flex: 1;
}
.duik-grid {
    display: grid;
    grid-template-columns: 1fr 1fr;
    grid-auto-rows: 17px;
    margin: 3px 26px 0 21px;
    background: #1f1f1f;
    color: #c0c0c0;
    font-size: 7px;
}
.duik-grid .full {
    grid-column: 1 / 3;
}
.duik-grid button {
    display: flex;
    align-items: center;
    justify-content: center;
    gap: 6px;
    white-space: nowrap;
}
.duik-grid svg, .duik-grid em {
    color: #c98a1e;
    font-style: normal;
    font-size: 6px;
}

/* mirror & offset */
.mirror {
    height: 108px;
}
.mirror-body {
    flex: 1;
    display: flex;
    gap: 4px;
    padding: 4px 0 0 6px;
    background: #333;
}
.mirror-main {
    width: 76px;
}
.mirror fieldset {
    min-width: 0;
    height: 46px;
    margin: 0 0 3px;
    padding: 0 2px;
    border: 1px solid #3d3d3d;
}
.mirror legend {
    padding: 0 2px;
}
.mirror fieldset label {
    display: flex;
    align-items: center;
    gap: 2px;
    margin-top: 2px;
    white-space: nowrap;
}
.mirror fieldset button {
    width: 100%;
    height: 15px;
    margin-top: 5px;
    background: #1f1f1f;
    color: #b5b5b5;
}
.mirror-side {
    width: 50px;
    display: flex;
    flex-direction: column;
    gap: 4px;
    color: #c5c5c5;
}
.mirror-side button {
    height: 17px;
    padding-left: 6px;
    background: #1f1f1f;
    text-align: left;
}
.kiki {
    height: 18px;
    background: #1a1a1a;
    color: #fff;
    font: bold 12px/18px Lato, sans-serif;
    position: relative;
    padding-left: 4px;
}
.kiki svg {
    position: absolute;
    left: 5px;
    top: 0;
}
.mirror-side input {
    margin: 9px 0 0 6px;
    padding-left: 3px;
    background: #1f1f1f;
}
.mirror .slide input {
    width: 70px;
    flex: none;
    margin-left: 5px;
}
.faint {
    display: flex;
    gap: 22px;
    margin-top: 6px;
    color: #555;
    white-space: nowrap;
}
input[type="range"] {
    appearance: none;
    height: 7px;
    background: linear-gradient(#151515, #151515) center / 100% 2px no-repeat;
}
input[type="range"]::-webkit-slider-thumb {
    appearance: none;
    width: 7px;
    height: 7px;
    border-radius: 50%;
    background: #858585;
}

/* motion 2 */
.motion {
    flex: 1;
}
.motion-head {
    height: 16px;
    display: flex;
    align-items: center;
    padding-left: 4px;
    gap: 15px;
}
.mount {
    width: 16px;
}
.motion-ease {
    height: 44px;
    display: flex;
    align-items: center;
    padding-left: 3px;
    gap: 6px;
}
.sliders {
    width: 44px;
    display: grid;
    gap: 7px;
}
.sliders input {
    width: 100%;
}
.nine {
    width: 40px;
    display: grid;
    grid-template-columns: repeat(3, 1fr);
    gap: 1px;
    background: #1b1b1b;
    color: #ccc;
    text-align: center;
}
.nine span {
    height: 13px;
    line-height: 13px;
    background: #232323;
}
.marks {
    display: grid;
    grid-auto-rows: 14px;
}
.plum {
    color: #9c5a9c;
}
.teal {
    color: #2aa5b5;
}
.motion-grid {
    display: grid;
    grid-template-columns: 37px 35px 40px;
    grid-auto-rows: 13px;
    gap: 1px;
    padding: 3px 4px;
    font-size: 5px;
}
.motion-grid button {
    display: flex;
    align-items: center;
    gap: 3px;
}
.motion-grid svg {
    color: #b5b5b5;
}
.motion-foot {
    display: flex;
    align-items: center;
    gap: 10px;
    padding: 1px 4px;
}
.motion-foot button {
    display: flex;
    justify-content: center;
    width: 30px;
    padding: 2px;
    border: 1px solid #2d2d2d;
}

/* effects & presets */
.effects {
    height: 108px;
}
.effects .search {
    margin: 2px 9px 10px 4px;
}
.effects .search b {
    color: #ddd;
    font-size: 9px;
}
.effects ul {
    margin: 0;
    padding: 0 4px 0 27px;
    list-style: none;
    line-height: 9px;
    white-space: nowrap;
}
.effects .picked {
    background: #303030;
}
.picked span {
    padding: 1px 2px 1px 0;
    background: #b5b5b5;
    color: #333;
}
.info {
    flex: 1;
    justify-content: space-between;
    padding: 1px 12px 3px 5px;
}
.info svg {
    width: 6px;
    height: 6px;
    align-self: flex-end;
}

/* floating palettes */
.float {
    position: absolute;
    background: #232323;
    box-shadow: 1px 1px 3px rgba(0, 0, 0, 0.6);
}
.cap {
    height: 15px;
    display: flex;
    justify-content: flex-end;
    align-items: flex-end;
    background: #fff;
}
.cap i {
    width: 9px;
    height: 11px;
    background: #ddd;
}
.plate {
    left: 930px;
    top: 277px;
    width: 69px;
    height: 29px;
    background: #c6c6c6;
}
.gear-back {
    left: 920px;
    top: 246px;
    width: 58px;
    height: 53px;
    border: 1px solid #151515;
}
.gear-win {
    left: 915px;
    top: 241px;
    width: 58px;
    height: 53px;
}
.gear-win button {
    display: flex;
    align-items: center;
    justify-content: center;
    margin: 17px 0 0 30px;
    width: 14px;
    height: 16px;
    background: #606060;
    color: #fff;
}
.marker-win {
    left: 841px;
    top: 139px;
    width: 106px;
    height: 173px;
}
.marker-body {
    display: grid;
    grid-auto-rows: 15px;
    align-items: center;
    padding: 17px 0 0 72px;
}
.down {
    width: 6px;
    height: 4px;
    margin-left: 5px;
    background: #d0d0d0;
    clip-path: polygon(0 0, 100% 0, 50% 100%);
}
.shift-form {
    display: grid;
    grid-template-columns: 22px 20px 36px;
    grid-auto-rows: 19px;
    gap: 0 4px;
    align-items: center;
    padding-left: 5px;
    color: #c5c5c5;
}
.shift-form label {
    display: flex;
    align-items: center;
    gap: 3px;
    color: #8c8c8c;
}
.shift-form [type="radio"] {
    appearance: none;
    width: 4px;
    height: 4px;
    border-radius: 50%;
    background: #ddd;
}
.shift-form .num {
    width: 20px;
    text-align: center;
}
.ask {
    grid-column: 2;
}
.crop-win {
    left: 839px;
    top: 61px;
    width: 73px;
    height: 161px;
}
.crop-body {
    display: flex;
    justify-content: space-between;
}
.crop-main {
    width: 58px;
    display: flex;
    flex-direction: column;
    padding-top: 4px;
    white-space: nowrap;
}
.crop-title {
    padding-left: 7px;
}
.crop-main button {
    height: 14px;
    margin: 5px 2px 2px;
    background: #202020;
    color: #c5c5c5;
    font-weight: bold;
}
.crop-main .apart {
    margin-top: 21px;
    margin-bottom: 0;
}
.crop-main label {
    display: flex;
    align-items: center;
    gap: 1px;
    padding-left: 7px;
}
.crop-main .pad {
    margin-top: 9px;
    padding-left: 11px;
}
.pad .num {
    width: 15px;
    padding-left: 2px;
    color: #d5d5d5;
}
.q {
    margin: 23px 0 0 13px;
}
.crop-side {
    width: 10px;
    display: flex;
    flex-direction: column;
    padding-top: 17px;
    overflow: hidden;
    line-height: 7px;
}
.crop-side .gap {
    margin-top: 6px;
}

/* timeline */
.timeline {
    flex: 1;
    display: flex;
    flex-direction: column;
    background: #232323;
}
.comp-tabs {
    height: 15px;
    display: flex;
    align-items: center;
    gap: 30px;
    padding-left: 14px;
    color: #777;
    white-space: nowrap;
}
.comp-tabs span {
    display: flex;
    align-items: center;
    gap: 5px;
}
.comp-tabs .active {
    height: 14px;
    margin-left: -9px;
    border-bottom: 1px solid #aaa;
    color: #b5b5b5;
}
.comp-tabs svg {
    width: 5px;
    height: 5px;
}
.time-body {
    flex: 1;
    display: grid;
    grid-template-columns: 404px 1fr 13px;
}
.layer-bar {
    height: 18px;
    display: flex;
    align-items: center;
    justify-content: space-between;
    padding: 0 10px 0 5px;
}
.timecode {
    width: 54px;
    color: #2b6fae;
    text-align: center;
}
.timecode b {
    display: block;
    color: #2d8ceb;
    font: bold 9px/9px Lato, sans-serif;
}
.timecode small {
    display: block;
    font-size: 5px;
    line-height: 6px;
    opacity: 0.6;
}
.layer-bar .search {
    width: 232px;
}
.layer-icons {
    display: flex;
    gap: 7px;
    color: #aaa;
}
.layer-table {
    width: 100%;
    table-layout: fixed;
    border-collapse: collapse;
}
.l-av {
    width: 38px;
}
.l-tag {
    width: 18px;
}
.l-num {
    width: 16px;
}
.l-name {
    width: 104px;
}
.l-mode {
    width: 41px;
}
.l-mat {
    width: 46px;
}
.l-sw {
    width: 71px;
}
.layer-table tr {
    height: 9px;
}
.layer-table th, .layer-table td {
    height: 9px;
    padding: 0;
    font-weight: normal;
    text-align: left;
    white-space: nowrap;
}
.layer-table th {
    background: #303030;
}
.layer-table svg {
    width: 6px;
    height: 6px;
    margin-right: 2px;
    vertical-align: middle;
    color: #aaa;
}
.layer-table .icons:first-child {
    padding-left: 4px;
}
.layer-table th:first-child svg {
    margin-right: 3px;
}
.layer-table .mid {
    padding-left: 7px;
}
.layer-table i {
    vertical-align: middle;
    margin-right: 2px;
}
.selected td {
    background: #303030;
    color: #c5c5c5;
}
.selected .drop {
    width: 34px;
    background: #1d1d1d;
}
.selected .drop.w-parent {
    width: 46px;
}
.name b {
    display: inline-block;
    width: 93px;
    height: 9px;
    border: 1px solid #b5b5b5;
    line-height: 7px;
}
.indent {
    text-indent: 10px;
}
.indent i {
    margin-right: 4px;
}
.shape {
    text-indent: 2px;
}
.shape span {
    display: inline-block;
    width: 110px;
    background: #454545;
}
.layer-table .add {
    text-align: right;
}
.w-group {
    width: 66px;
    padding-left: 4px;
    background: #1d1d1d;
}
.lanes {
    position: relative;
    min-width: 0;
    padding-top: 3px;
    background: linear-gradient(#232323 36px, #2e2e2e 36px);
}
.navigator {
    height: 4px;
    background: #656565;
    border-right: 3px solid #2d8ceb;
}
.ruler {
    height: 11px;
    display: flex;
    justify-content: space-between;
    padding-right: 2px;
    font-size: 5px;
    line-height: 8px;
}
.ruler span {
    width: 0;
    display: flex;
    justify-content: center;
}
.work-area {
    height: 7px;
    background: #686464;
    border-right: 3px solid #2d8ceb;
}
.cache {
    height: 3px;
    background: #23893a;
}
.clip {
    height: 9px;
    margin-right: 3px;
    background: linear-gradient(#6a78dc, #5260bd);
}
.playhead {
    position: absolute;
    left: 0;
    top: 2px;
    bottom: 0;
    width: 8px;
    border-left: 1px solid #3a5f85;
}
.playhead svg {
    height: 13px;
    display: block;
    margin-left: -4px;
}
.lane-end {
    display: flex;
    flex-direction: column;
    align-items: center;
    gap: 2px;
    padding-top: 17px;
    color: #aaa;
}

.pointer {
    position: absolute;
    left: 101px;
    top: 35px;
    width: 90px;
    height: 106px;
}
.watermark {
    position: absolute;
    right: 6px;
    bottom: 7px;
    color: #fff;
    text-align: right;
    text-shadow: 1px 1px 2px #000;
}
.site {
    margin-bottom: -4px;
    font: italic bold 44px/34px "Liberation Sans", sans-serif;
}
.site span {
    color: #d0140c;
}
.site small {
    font-size: 17px;
    font-weight: normal;
}
.slogan {
    font: bold 11px/13px "Noto Sans CJK SC", sans-serif;
}
```
